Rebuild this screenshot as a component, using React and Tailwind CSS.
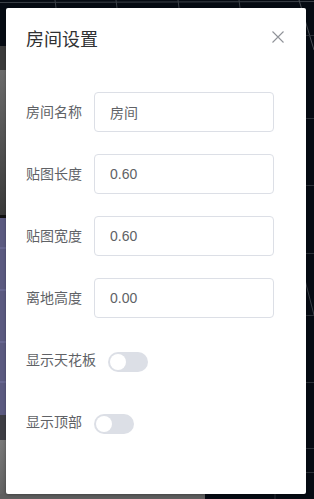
import { useState } from "react";

// 3D viewport behind the dialog (only edges are visible)
function SceneBackdrop() {
  return (
    <svg className="absolute inset-0" width="314" height="499" viewBox="0 0 314 499">
      <defs>
        <linearGradient id="wall" x1="0" y1="0" x2="0" y2="1">
          <stop offset="0" stopColor="#6b6b6b" />
          <stop offset="1" stopColor="#3a3a3a" />
        </linearGradient>
        <linearGradient id="floor" x1="0" y1="0" x2="1" y2="1">
          <stop offset="0" stopColor="#7a7a7a" />
          <stop offset="1" stopColor="#4a4a4a" />
        </linearGradient>
      </defs>
      <rect width="314" height="499" fill="#060b13" />
      {/* left room geometry */}
      <rect x="0" y="46" width="20" height="24" fill="#3b3b3b" />
      <rect x="0" y="70" width="20" height="145" fill="url(#wall)" />
      <rect x="0" y="215" width="20" height="3" fill="#111" />
      <rect x="0" y="218" width="20" height="197" fill="#5b5a80" />
      <rect x="0" y="415" width="20" height="25" fill="#3d3d44" />
      <polygon points="0,440 20,440 20,499 0,499" fill="url(#floor)" />
      <rect x="0" y="494" width="205" height="5" fill="#5e5e5e" />
      {[248, 290, 342, 382].map((y) => (
        <line key={y} x1="0" y1={y} x2="20" y2={y} stroke="#7473a0" strokeWidth="1" />
      ))}
      {/* grid lines */}
      <line x1="0" y1="2.5" x2="314" y2="1.5" stroke="#3c4148" strokeWidth="1" />
      {[55, 116, 178, 239].map((x) => (
        <line key={x} x1={x} y1="0" x2={x + 1} y2="8" stroke="#3c4148" strokeWidth="1" />
      ))}
      <line x1="299" y1="0" x2="314" y2="50" stroke="#4a4f56" strokeWidth="1" />
      <line x1="305" y1="280" x2="314" y2="315" stroke="#3a3f46" strokeWidth="1" />
      {[35, 118, 185, 253, 315, 382, 448, 472].map((y) => (
        <line key={y} x1="306" y1={y + 0.5} x2="314" y2={y + 0.5} stroke="#2c3138" strokeWidth="1" />
      ))}
      <line x1="275" y1="494" x2="275" y2="499" stroke="#2c3138" strokeWidth="1" />
    </svg>
  );
}

function Switch({ checked, onChange }) {
  return (
    <button
      onClick={() => onChange(!checked)}
      className={`relative mt-[4px] h-[20px] w-[40px] rounded-full ${checked ? "bg-[#409eff]" : "bg-[#dcdfe6]"}`}
    >
      <span
        className={`absolute top-[2px] h-[16px] w-[16px] rounded-full bg-white ${checked ? "left-[22px]" : "left-[2px]"}`}
      />
    </button>
  );
}

export default function App() {
  const [name, setName] = useState("房间");
  const [length, setLength] = useState("0.60");
  const [width, setWidth] = useState("0.60");
  const [height, setHeight] = useState("0.00");
  const [showCeiling, setShowCeiling] = useState(false);
  const [showTop, setShowTop] = useState(false);

  const fields = [
    { label: "房间名称", value: name, set: setName },
    { label: "贴图长度", value: length, set: setLength },
    { label: "贴图宽度", value: width, set: setWidth },
    { label: "离地高度", value: height, set: setHeight },
  ];

  return (
    <div
      className="relative h-[499px] w-[314px] overflow-hidden"
      style={{ fontFamily: '"Liberation Sans", "Noto Sans CJK SC", sans-serif' }}
    >
      <SceneBackdrop />

      <div className="relative pl-[6px] pt-[8px]">
        <div className="relative h-[486px] w-[300px] rounded-[2px] bg-white shadow-[0_1px_3px_rgba(0,0,0,0.3)]">
          {/* header */}
          <div className="px-[20px] pb-[10px] pt-[20px]">
            <h2 className="text-[18px] leading-[24px] text-[#303133]">房间设置</h2>
            <button className="absolute right-[20px] top-[20px] flex h-[16px] w-[16px] items-center justify-center">
              <svg width="12" height="12" viewBox="0 0 12 12" className="translate-y-[1px]">
                <path d="M0.5 0.5 L11.5 11.5 M11.5 0.5 L0.5 11.5" stroke="#909399" strokeWidth="1.1" />
              </svg>
            </button>
          </div>

          {/* body */}
          <div className="px-[20px] pt-[30px]">
            {fields.map((f) => (
              <div key={f.label} className="mb-[22px] flex h-[40px] items-center">
                <label className="mr-[12px] text-[14px] text-[#606266]">{f.label}</label>
                <input
                  value={f.value}
                  onChange={(e) => f.set(e.target.value)}
                  className="h-[40px] w-[180px] rounded-[4px] border border-[#dcdfe6] px-[15px] text-[14px] text-[#606266] outline-none"
                />
              </div>
            ))}

            <div className="mb-[22px] flex h-[40px] items-center">
              <label className="mr-[12px] text-[14px] text-[#606266]">显示天花板</label>
              <Switch checked={showCeiling} onChange={setShowCeiling} />
            </div>

            <div className="mt-[2px] flex h-[40px] items-center">
              <label className="mr-[12px] text-[14px] text-[#606266]">显示顶部</label>
              <Switch checked={showTop} onChange={setShowTop} />
            </div>
          </div>
        </div>
      </div>
    </div>
  );
}
